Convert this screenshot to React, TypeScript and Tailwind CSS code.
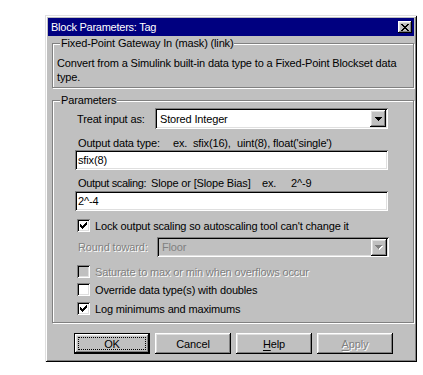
import React from "react";

const raised =
  "shadow-[inset_-1px_-1px_0_#000,inset_1px_1px_0_#fff,inset_-2px_-2px_0_#808080,inset_2px_2px_0_#dfdfdf]";
const sunken =
  "shadow-[inset_1px_1px_0_#808080,inset_-1px_-1px_0_#fff,inset_2px_2px_0_#000,inset_-2px_-2px_0_#dfdfdf]";
const disabledText = "text-[#808080] [text-shadow:1px_1px_0_#fff]";

function PixelRows({ rows, color, w, h }: { rows: [number, number, number][]; color: string; w: number; h: number }) {
  return (
    <svg width={w} height={h} viewBox={`0 0 ${w} ${h}`} shapeRendering="crispEdges" className="block">
      {rows.map(([y, x, ww], i) => (
        <rect key={i} x={x} y={y} width={ww} height={1} fill={color} />
      ))}
    </svg>
  );
}

const checkRows: [number, number, number][] = [
  [0, 6, 1],
  [1, 5, 2],
  [2, 0, 1],
  [2, 4, 3],
  [3, 0, 2],
  [3, 3, 3],
  [4, 0, 5],
  [5, 1, 3],
  [6, 2, 1],
];

const arrowRows: [number, number, number][] = [
  [0, 0, 7],
  [1, 1, 5],
  [2, 2, 3],
  [3, 3, 1],
];

const closeRows: [number, number, number][] = [
  [0, 0, 2],
  [0, 6, 2],
  [1, 1, 2],
  [1, 5, 2],
  [2, 2, 4],
  [3, 3, 2],
  [4, 2, 4],
  [5, 1, 2],
  [5, 5, 2],
  [6, 0, 2],
  [6, 6, 2],
];

function CheckBox({ checked, disabled }: { checked?: boolean; disabled?: boolean }) {
  return (
    <span
      className={`w-[13px] h-[13px] shrink-0 flex items-center justify-center ${sunken} ${
        disabled ? "bg-[#c0c0c0]" : "bg-white"
      }`}
    >
      {checked ? <PixelRows rows={checkRows} color="#000" w={7} h={7} /> : null}
    </span>
  );
}

function CheckRow({ checked, disabled, label }: { checked?: boolean; disabled?: boolean; label: string }) {
  return (
    <div className="flex items-center h-[13px] ml-[2px] gap-[5px]">
      <CheckBox checked={checked} disabled={disabled} />
      <span className={`whitespace-nowrap ${disabled ? disabledText : ""}`}>{label}</span>
    </div>
  );
}

function DropButton({ disabled }: { disabled?: boolean }) {
  return (
    <span className={`w-[16px] h-[17px] bg-[#c0c0c0] ${raised} flex items-center justify-center shrink-0`}>
      {disabled ? (
        <span className="relative w-[8px] h-[5px]">
          <span className="absolute left-[1px] top-[1px]">
            <PixelRows rows={arrowRows} color="#fff" w={7} h={4} />
          </span>
          <span className="absolute left-0 top-0">
            <PixelRows rows={arrowRows} color="#808080" w={7} h={4} />
          </span>
        </span>
      ) : (
        <PixelRows rows={arrowRows} color="#000" w={7} h={4} />
      )}
    </span>
  );
}

function GroupBox({
  label,
  className,
  children,
}: {
  label: string;
  className: string;
  children: React.ReactNode;
}) {
  return (
    <div
      className={`relative border border-[#808080] shadow-[inset_1px_1px_0_#fff,1px_1px_0_#fff] ${className}`}
    >
      <span className="absolute top-[-8px] left-[7px] bg-[#c0c0c0] px-[1px] leading-[14px] whitespace-nowrap">
        {label}
      </span>
      {children}
    </div>
  );
}

function Button({
  children,
  isDefault,
}: {
  children: React.ReactNode;
  isDefault?: boolean;
}) {
  if (isDefault) {
    return (
      <div className="w-[76px] h-[21px] border border-black bg-[#c0c0c0]">
        <div className={`w-full h-full ${raised} p-[3px]`}>
          <div className="w-full h-full border border-dotted border-black flex items-center justify-center">
            {children}
          </div>
        </div>
      </div>
    );
  }
  return (
    <div className={`w-[76px] h-[21px] bg-[#c0c0c0] ${raised} flex items-center justify-center`}>
      {children}
    </div>
  );
}

export default function App() {
  return (
    <div className="w-[423px] h-[375px] bg-white overflow-hidden font-['Liberation_Sans',Arial,sans-serif] text-[11px] tracking-[-0.15px] leading-[14px] text-black">
      <div className="ml-[45px] mt-[15px] w-[372px] h-[347px] bg-[#c0c0c0] p-[3px] shadow-[inset_1px_1px_0_#dfdfdf,inset_-1px_-1px_0_#000,inset_2px_2px_0_#fff,inset_-2px_-2px_0_#808080] flex flex-col">
        {/* Title bar */}
        <div className="h-[18px] bg-[#000080] flex items-center justify-between pl-[3px] pr-[2px] shrink-0">
          <span className="text-white whitespace-nowrap tracking-[-0.25px]">Block Parameters: Tag</span>
          <span className={`w-[14px] h-[12px] bg-[#c0c0c0] ${raised} flex items-center justify-center`}>
            <PixelRows rows={closeRows} color="#000" w={8} h={7} />
          </span>
        </div>

        {/* Mask description */}
        <GroupBox label="Fixed-Point Gateway In (mask) (link)" className="ml-[4px] mt-[7px] w-[362px] h-[45px] shrink-0">
          <div className="pt-[12px] pl-[4px] whitespace-nowrap">
            Convert from a Simulink built-in data type to a Fixed-Point Blockset data
            <br />
            type.
          </div>
        </GroupBox>

        {/* Parameters */}
        <GroupBox label="Parameters" className="ml-[4px] mt-[12px] w-[362px] h-[223px] shrink-0">
          <div className="pt-[7px] pl-[22px] flex flex-col">
            {/* Treat input as */}
            <div className="flex items-center h-[21px]">
              <span className="w-[80px] pl-[2px] whitespace-nowrap">Treat input as:</span>
              <div className={`w-[233px] h-[21px] bg-white ${sunken} flex items-center justify-between pl-[5px] pr-[2px]`}>
                <span className="whitespace-nowrap">Stored Integer</span>
                <DropButton />
              </div>
            </div>

            {/* Output data type */}
            <div className="mt-[7px] h-[14px] pl-[3px] flex whitespace-nowrap">
              <span className="w-[95px] shrink-0">Output data type:</span>
              <span className="w-[20px] shrink-0">ex.</span>
              <span className="w-[44px] shrink-0">sfix(16),</span>
              <span className="w-[36px] shrink-0">uint(8),</span>
              <span>float('single')</span>
            </div>
            <div className={`w-[313px] h-[20px] bg-white ${sunken} flex items-center pl-[3px]`}>
              <span>sfix(8)</span>
            </div>

            {/* Output scaling */}
            <div className="mt-[6px] h-[14px] pl-[3px] flex whitespace-nowrap">
              <span className="w-[73px] shrink-0 tracking-[-0.35px]">Output scaling:</span>
              <span className="w-[111px] shrink-0">Slope or [Slope Bias]</span>
              <span className="w-[29px] shrink-0">ex.</span>
              <span>2^-9</span>
            </div>
            <div className={`mt-[1px] w-[313px] h-[20px] bg-white ${sunken} flex items-center pl-[3px]`}>
              <span>2^-4</span>
            </div>

            <div className="mt-[8px]">
              <CheckRow checked label="Lock output scaling so autoscaling tool can't change it" />
            </div>

            {/* Round toward */}
            <div className="mt-[5px] flex items-center h-[20px]">
              <span className={`w-[82px] pl-[3px] whitespace-nowrap ${disabledText}`}>Round toward:</span>
              <div className={`w-[232px] h-[20px] bg-[#c0c0c0] ${sunken} flex items-center justify-between pl-[5px] pr-[2px]`}>
                <span className="text-[#808080]">Floor</span>
                <DropButton disabled />
              </div>
            </div>

            <div className="mt-[8px]">
              <CheckRow disabled label="Saturate to max or min when overflows occur" />
            </div>
            <div className="mt-[5px]">
              <CheckRow label="Override data type(s) with doubles" />
            </div>
            <div className="mt-[6px]">
              <CheckRow checked label="Log minimums and maximums" />
            </div>
          </div>
        </GroupBox>

        {/* Buttons */}
        <div className="mt-[10px] ml-[26px] flex gap-[5px] shrink-0">
          <Button isDefault>OK</Button>
          <Button>Cancel</Button>
          <Button>
            <span>
              <span className="underline underline-offset-[2px]">H</span>elp
            </span>
          </Button>
          <Button>
            <span className={disabledText}>
              <span className="underline underline-offset-[2px]">A</span>pply
            </span>
          </Button>
        </div>
      </div>
    </div>
  );
}
